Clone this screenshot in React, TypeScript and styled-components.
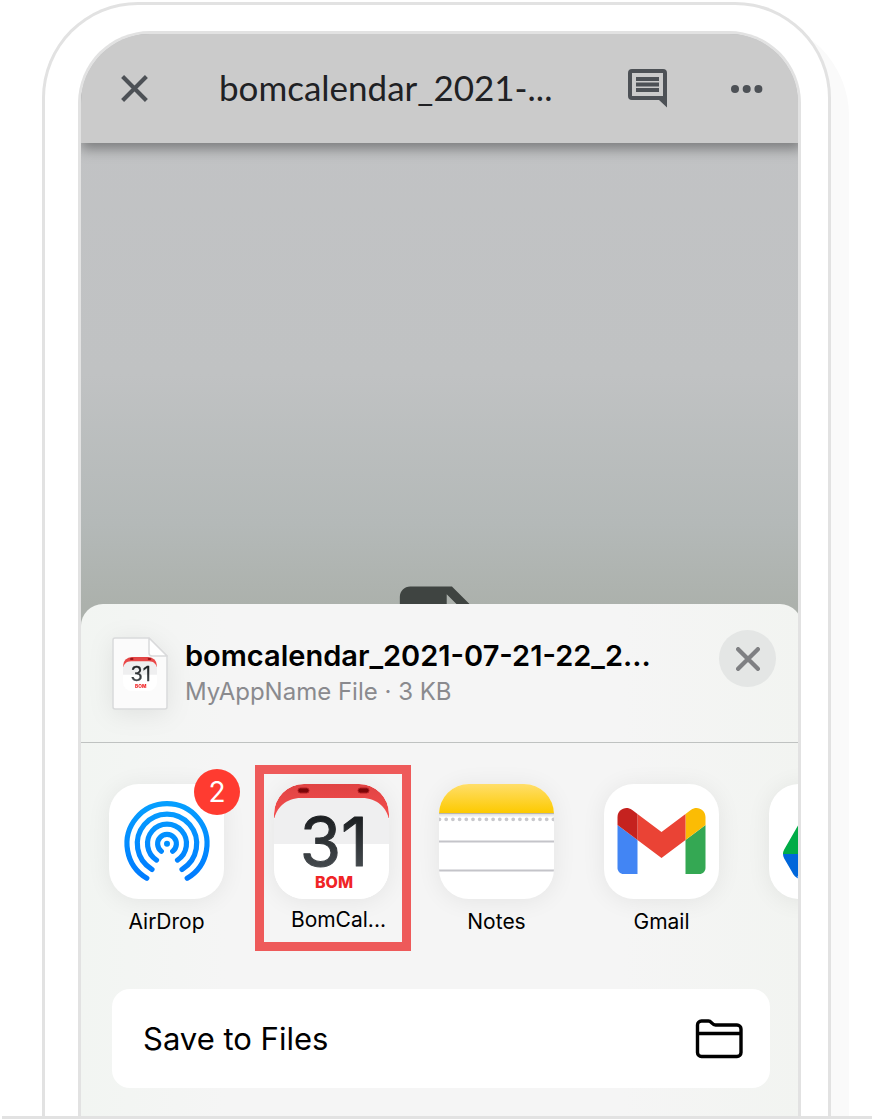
import React from "react";
import styled, { createGlobalStyle } from "styled-components";

const GlobalStyle = createGlobalStyle`
  * { box-sizing: border-box; }
  body {
    margin: 0;
    background: #fff;
    color: #000;
    font-family: Inter, "Liberation Sans", sans-serif;
    overflow-x: hidden;
  }
  button { font: inherit; color: inherit; border: 0; padding: 0; background: none; cursor: pointer; }
  svg { display: block; }
`;

const Stage = styled.main`
  margin: 0 17px 0 2px;
  padding: 2px 41px 0 40px;
  border-bottom: 3px solid #e2e2e2;
  overflow: hidden;
`;

const Phone = styled.div`
  border: 3px solid #e2e2e2;
  border-bottom: 0;
  border-radius: 96px 96px 0 0;
  padding: 26px 27px 0 33px;
  background: #fff;
  box-shadow: 18px 18px 0 #fafafa;
`;

const Screen = styled.div`
  border: 3px solid #e2e2e2;
  border-bottom: 0;
  border-radius: 72px 72px 0 0;
  overflow: hidden;
  background: linear-gradient(#c2c3c5 0, #c0c2c3 340px, #b4b9b8 490px, #acb1ac 570px);
`;

const Viewport = styled.div`
  margin-right: -4px;
`;

const TopBar = styled.header`
  display: flex;
  align-items: center;
  height: 109px;
  padding: 0 39px;
  background: #cbcbcb;
  color: #4d5156;
  box-shadow: 0 6px 12px rgba(0, 0, 0, 0.36);
`;

const DocTitle = styled.h1`
  flex: 1;
  margin: 0;
  padding: 0 0 3px 70px;
  color: #202124;
  font-family: Lato, sans-serif;
  font-size: 35px;
  line-height: 44px;
  font-weight: 400;
  white-space: nowrap;
`;

const BarActions = styled.div`
  display: flex;
  align-items: center;
  gap: 64px;
`;

const Preview = styled.section`
  display: flex;
  justify-content: center;
  align-items: flex-start;
  height: 461px;
  padding-top: 433px;
  overflow: hidden;
  color: #3f4441;
`;

const Sheet = styled.section`
  border-radius: 22px 22px 0 0;
  padding-bottom: 28px;
  background: linear-gradient(90deg, #f2f5f2, #f5f5f5 20%, #f5f5f5 75%, #f2f4f1);
`;

const SheetHead = styled.header`
  display: flex;
  align-items: flex-start;
  height: 139px;
  padding: 26px 26px 0 31px;
  border-bottom: 1px solid #bfc2c1;
`;

const FileIcon = styled.div`
  display: grid;
  place-items: center;
  margin: 7px 17px 0 0;
  filter: drop-shadow(0 4px 12px rgba(0, 0, 0, 0.08));
  > * { grid-area: 1 / 1; }
`;

const FileText = styled.div`
  flex: 1;
  min-width: 0;
  padding-top: 6px;
  white-space: nowrap;
`;

const FileName = styled.h2`
  margin: 0;
  font-size: 29px;
  line-height: 40px;
  font-weight: 600;
`;

const FileMeta = styled.p`
  margin: 0;
  font-size: 24px;
  line-height: 32px;
  color: #8a8a8e;
`;

const CloseButton = styled.button`
  display: grid;
  place-items: center;
  width: 57px;
  height: 57px;
  border-radius: 50%;
  background: #e4e6e5;
  color: #7f8083;
`;

const AppRow = styled.nav`
  display: flex;
  gap: 50px;
  height: 246px;
  padding: 41px 0 0 28px;
`;

const AppButton = styled.button`
  position: relative;
  flex: none;
  display: flex;
  flex-direction: column;
  width: 115px;
  height: 148px;
`;

const Tile = styled.span`
  flex: none;
  display: block;
  width: 115px;
  height: 115px;
  border-radius: 30px;
  overflow: hidden;
  background: #fff;
  box-shadow: 0 2px 24px rgba(0, 0, 0, 0.07);
`;

const AppLabel = styled.span<{ $truncated?: boolean }>`
  padding: ${(p) => (p.$truncated ? "6px" : "8px")} 3px 0;
  font-size: 21px;
  line-height: 30px;
  text-align: ${(p) => (p.$truncated ? "end" : "center")};
  white-space: nowrap;
`;

const Badge = styled.span`
  position: absolute;
  top: -15px;
  right: -16px;
  width: 46px;
  height: 46px;
  border-radius: 50%;
  background: #ff3b30;
  color: #fff;
  font-size: 28px;
  line-height: 46px;
  text-align: center;
`;

const Highlight = styled.span`
  position: absolute;
  inset: -19px -22px -19px -19px;
  border: 9px solid #ee5a5a;
`;

const SaveButton = styled.button`
  display: flex;
  align-items: center;
  justify-content: space-between;
  width: calc(100% - 63px);
  height: 99px;
  margin: 0 32px 0 31px;
  padding: 0 27px 0 31px;
  border-radius: 18px;
  background: #fff;
  font-size: 31px;
  line-height: 40px;
`;

const Cross = ({ size, cap }: { size: number; cap: "butt" | "round" }) => (
  <svg width={size} height={size} viewBox="0 0 28 28" fill="none" stroke="currentColor" strokeWidth={cap === "round" ? 5 : 4} strokeLinecap={cap}>
    <path d="M2.500 2.500l23 23M25.500 2.500l-23 23" />
  </svg>
);

const CommentIcon = () => (
  <svg width="39" height="39" viewBox="0 0 39 39" fill="currentColor">
    <path fillRule="evenodd" d="M4 0h31a4 4 0 0 1 4 4v34.500l-8-7.500H4a4 4 0 0 1-4-4V4a4 4 0 0 1 4-4zM4 4v23h31V4z" />
    <path d="M8 8h23v4H8zM8 13.500h23v4H8zM8 19h23v4H8z" />
  </svg>
);

const DotsIcon = () => (
  <svg width="32" height="10" viewBox="0 0 32 10" fill="currentColor">
    <circle cx="4" cy="5" r="4" />
    <circle cx="15.700" cy="5" r="4" />
    <circle cx="27.400" cy="5" r="4" />
  </svg>
);

const DocGlyph = () => (
  <svg width="125" height="125" viewBox="0 0 24 24" fill="currentColor">
    <path d="M6 2c-1.100 0-2 .9-2 2v16c0 1.100.9 2 2 2h12c1.100 0 2-.9 2-2V8l-6-6H6zm7 7V3.500L18.500 9H13z" />
  </svg>
);

const PageShape = () => (
  <svg width="56" height="73" viewBox="0 0 56 73" fill="#fbfbfb" stroke="#d9dadb" strokeWidth="1.500" strokeLinejoin="round">
    <path d="M3 1h34l18 18v51a2 2 0 0 1-2 2H3a2 2 0 0 1-2-2V3a2 2 0 0 1 2-2z" />
    <path d="M37 1v15a3 3 0 0 0 3 3h15z" fill="#fff" />
  </svg>
);

const BomIcon = ({ size }: { size: number }) => (
  <svg width={size} height={size} viewBox="0 0 115 115" fontFamily="Inter, sans-serif" textAnchor="middle">
    <defs>
      <linearGradient id="bomRed" x1="0" y1="0" x2="0" y2="1">
        <stop offset="0" stopColor="#e04444" />
        <stop offset="1" stopColor="#f44c4c" />
      </linearGradient>
      <linearGradient id="bomInk" x1="0" y1="0" x2="0" y2="1">
        <stop offset="0.2" stopColor="#1c1f22" />
        <stop offset="1" stopColor="#50565a" />
      </linearGradient>
    </defs>
    <path d="M0 34V30A30 30 0 0 1 30 0H85A30 30 0 0 1 115 30V34Z" fill="url(#bomRed)" />
    <path d="M0 36C2 24 12 14 27 14H88C103 14 113 24 115 36V61H0Z" fill="#efeff0" />
    <path d="M0 60H115V85A30 30 0 0 1 85 115H30A30 30 0 0 1 0 85Z" fill="#fff" />
    <g fill="#7c0508" stroke="#b31f22" strokeWidth="1">
      <rect x="24" y="4" width="11" height="5" rx="2.500" />
      <rect x="84" y="4" width="11" height="5" rx="2.500" />
    </g>
    <text x="60" y="82" fontSize="67" fill="url(#bomInk)" stroke="url(#bomInk)" strokeWidth="1" strokeLinejoin="round">31</text>
    <text x="60" y="104" fontSize="16" fontWeight="800" fill="#f02426">BOM</text>
  </svg>
);

const AirDropIcon = () => (
  <svg width="115" height="115" viewBox="0 0 115 115" fill="none" stroke="url(#airBlue)" strokeWidth="5.200" strokeLinecap="round">
    <defs>
      <linearGradient id="airBlue" gradientUnits="userSpaceOnUse" x1="0" y1="17" x2="0" y2="97">
        <stop offset="0" stopColor="#06a0ff" />
        <stop offset="1" stopColor="#007aff" />
      </linearGradient>
    </defs>
    <path d="M37.800 94.200A40 40 0 1 1 78.200 94.200" />
    <path d="M43 85.400A29.700 29.700 0 1 1 73 85.400" />
    <path d="M47.500 76.100A19.500 19.500 0 1 1 68.500 76.100" />
    <path d="M52.300 67.200A9.400 9.400 0 1 1 63.700 67.200" />
    <circle cx="58" cy="59.700" r="3" fill="#0090ff" stroke="none" />
  </svg>
);

const NotesIcon = () => (
  <svg width="115" height="115" viewBox="0 0 115 115">
    <defs>
      <linearGradient id="notesTop" x1="0" y1="0" x2="0" y2="1">
        <stop offset="0" stopColor="#ffde6a" />
        <stop offset="1" stopColor="#fdca00" />
      </linearGradient>
    </defs>
    <rect width="115" height="29" fill="url(#notesTop)" />
    <rect y="29" width="115" height="1.500" fill="#b9b6ae" />
    <rect y="30.500" width="115" height="2" fill="#ececec" />
    <path d="M0.500 35.300H115" stroke="#c8c8cc" strokeWidth="3.800" strokeLinecap="round" strokeDasharray="0 6.700" />
    <path d="M0 57.500H115M0 86.500H115" stroke="#c4c4c9" strokeWidth="2" />
  </svg>
);

const GmailIcon = () => (
  <svg width="115" height="115" viewBox="38.500 18 115 115">
    <path fill="#4285f4" d="M58 108h14V74L52 59v43c0 3.320 2.690 6 6 6" />
    <path fill="#34a853" d="M120 108h14c3.320 0 6-2.690 6-6V59l-20 15" />
    <path fill="#fbbc04" d="M120 48v26l20-15v-8c0-7.420-8.470-11.650-14.400-7.200" />
    <path fill="#ea4335" d="M72 74V48l24 18 24-18v26L96 92" />
    <path fill="#c5221f" d="M52 51v8l20 15V48l-5.600-4.200c-5.940-4.450-14.400-.22-14.400 7.200" />
  </svg>
);

const DriveIcon = () => (
  <svg width="115" height="115" viewBox="-14 -17 115 115">
    <path fill="#0066da" d="m6.600 66.850 3.850 6.650c.8 1.400 1.950 2.500 3.300 3.300l13.750-23.800h-27.500c0 1.550.4 3.100 1.200 4.500z" />
    <path fill="#00ac47" d="m43.650 25-13.750-23.800c-1.350.8-2.500 1.900-3.300 3.300l-25.400 44a9.060 9.060 0 0 0-1.200 4.500h27.500z" />
    <path fill="#ea4335" d="m73.550 76.800c1.350-.8 2.500-1.900 3.300-3.300l9.250-16c.8-1.400 1.200-2.950 1.200-4.500h-27.500l5.850 11.500z" />
    <path fill="#00832d" d="m43.650 25 13.750-23.800c-1.350-.8-2.900-1.200-4.500-1.200h-18.500c-1.600 0-3.150.45-4.500 1.200z" />
    <path fill="#2684fc" d="m59.800 53h-32.300l-13.750 23.800c1.350.8 2.900 1.200 4.500 1.200h50.800c1.600 0 3.150-.45 4.500-1.200z" />
    <path fill="#ffba00" d="m73.400 26.500-12.700-22c-.8-1.400-1.950-2.500-3.300-3.300l-13.750 23.800 16.150 28h27.450c0-1.550-.4-3.100-1.200-4.500z" />
  </svg>
);

const FolderIcon = () => (
  <svg width="48" height="40" viewBox="0 0 48 40" fill="none" stroke="#000" strokeWidth="3.400" strokeLinejoin="round">
    <path d="M2.500 33.500V6A4 4 0 0 1 6.500 2h7c3 0 3.500 4 7 4h21.500A4 4 0 0 1 46 10v23.500A4 4 0 0 1 42 37.500H6.500A4 4 0 0 1 2.500 33.500z" />
    <path d="M2.500 14.500h43.500" />
  </svg>
);

type App = {
  name: string;
  label?: string;
  icon: React.ReactNode;
  badge?: number;
  highlighted?: boolean;
};

const apps: App[] = [
  { name: "AirDrop", label: "AirDrop", icon: <AirDropIcon />, badge: 2 },
  { name: "BomCalendar", label: "BomCal...", icon: <BomIcon size={115} />, highlighted: true },
  { name: "Notes", label: "Notes", icon: <NotesIcon /> },
  { name: "Gmail", label: "Gmail", icon: <GmailIcon /> },
  { name: "Drive", icon: <DriveIcon /> },
];

export default function App() {
  return (
    <>
      <GlobalStyle />
      <Stage>
        <Phone>
          <Screen>
            <Viewport>
              <TopBar>
                <button aria-label="Close">
                  <Cross size={29} cap="butt" />
                </button>
                <DocTitle>bomcalendar_2021-...</DocTitle>
                <BarActions>
                  <button aria-label="Comments">
                    <CommentIcon />
                  </button>
                  <button aria-label="More">
                    <DotsIcon />
                  </button>
                </BarActions>
              </TopBar>
              <Preview>
                <DocGlyph />
              </Preview>
              <Sheet>
                <SheetHead>
                  <FileIcon>
                    <PageShape />
                    <BomIcon size={34} />
                  </FileIcon>
                  <FileText>
                    <FileName>bomcalendar_2021-07-21-22_2...</FileName>
                    <FileMeta>MyAppName File · 3 KB</FileMeta>
                  </FileText>
                  <CloseButton aria-label="Dismiss">
                    <Cross size={24} cap="round" />
                  </CloseButton>
                </SheetHead>
                <AppRow aria-label="Share with">
                  {apps.map((app) => (
                    <AppButton key={app.name} aria-label={app.name}>
                      <Tile>{app.icon}</Tile>
                      {app.label && <AppLabel $truncated={app.label.endsWith("...")}>{app.label}</AppLabel>}
                      {app.badge && <Badge>{app.badge}</Badge>}
                      {app.highlighted && <Highlight />}
                    </AppButton>
                  ))}
                </AppRow>
                <SaveButton>
                  Save to Files
                  <FolderIcon />
                </SaveButton>
              </Sheet>
            </Viewport>
          </Screen>
        </Phone>
      </Stage>
    </>
  );
}
